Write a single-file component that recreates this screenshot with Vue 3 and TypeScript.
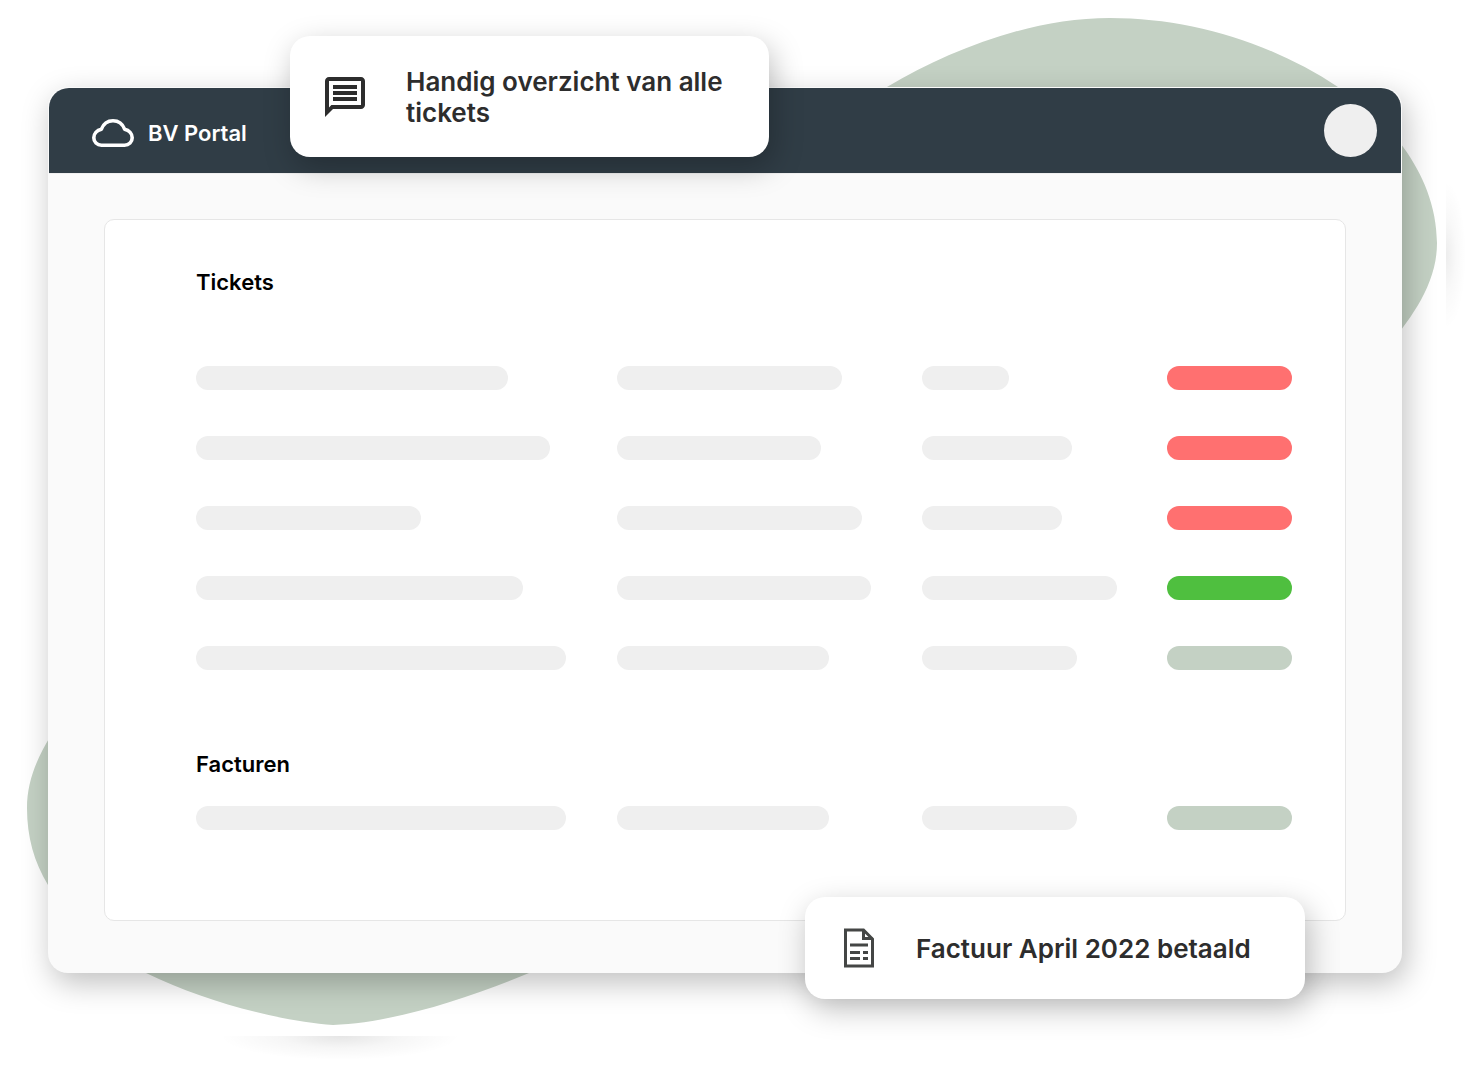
<script setup lang="ts">
type Status = 'open' | 'done' | 'idle'

interface Row {
  bars: [number, number, number]
  status: Status
}

interface Section {
  id: string
  title: string
  rows: Row[]
}

const sections: Section[] = [
  {
    id: 'tickets',
    title: 'Tickets',
    rows: [
      { bars: [312, 225, 87], status: 'open' },
      { bars: [354, 204, 150], status: 'open' },
      { bars: [225, 245, 140], status: 'open' },
      { bars: [327, 254, 195], status: 'done' },
      { bars: [370, 212, 155], status: 'idle' },
    ],
  },
  {
    id: 'facturen',
    title: 'Facturen',
    rows: [{ bars: [370, 212, 155], status: 'idle' }],
  },
]
</script>

<template>
  <div class="page">
    <div class="stage">
      <svg class="blob blob-top" width="451" height="360" viewBox="0 0 451 360" aria-hidden="true">
        <defs>
          <radialGradient id="glow-right" gradientUnits="userSpaceOnUse" cx="0" cy="0" r="1" gradientTransform="translate(426 255) scale(20 74)">
            <stop offset="0" stop-color="#000" stop-opacity="0.07" />
            <stop offset="0.5" stop-color="#000" stop-opacity="0.025" />
            <stop offset="1" stop-color="#000" stop-opacity="0" />
          </radialGradient>
        </defs>
        <path
          d="M7 87C70 50 150 18 230 18C310 18 390 42 458 87C500 112 557 170 557 243C557 285 530 320 505 350L7 350Z"
          transform="translate(-140 0)"
          fill="#c4d1c4"
        />
        <path d="M426 180h25v150h-25z" fill="url(#glow-right)" />
      </svg>
      <svg class="blob blob-bottom" width="600" height="360" viewBox="0 0 600 360" aria-hidden="true">
        <defs>
          <radialGradient id="glow-bottom" gradientUnits="userSpaceOnUse" cx="0" cy="0" r="1" gradientTransform="translate(340 329) scale(120 24)">
            <stop offset="0" stop-color="#000" stop-opacity="0.1" />
            <stop offset="0.5" stop-color="#000" stop-opacity="0.035" />
            <stop offset="1" stop-color="#000" stop-opacity="0" />
          </radialGradient>
        </defs>
        <path
          d="M70 0C45 35 27 65 27 101C27 130 34 155 48 178C70 215 105 245 146 266C205 295 280 314 333 318C390 316 465 293 529 266L580 240V0Z"
          fill="#c4d1c4"
        />
        <path d="M210 329h260v28H210z" fill="url(#glow-bottom)" />
      </svg>

      <main class="window">
        <header class="bar">
          <svg class="cloud" width="42" height="28" viewBox="0 0 42 28" aria-hidden="true">
            <path
              d="M9.5 26.2H32.5C37 26.2 40.2 23 40.2 18.8C40.2 14.8 37.2 11.2 32.6 10.2C30.6 5 26.6 1.8 21 1.8S11.4 5 9.4 10.2C4.8 11.2 1.8 14.8 1.8 18.8C1.8 23 5 26.2 9.5 26.2Z"
              fill="none"
              stroke="#fff"
              stroke-width="3.6"
              stroke-linejoin="round"
            />
          </svg>
          <span class="brand">BV Portal</span>
          <span class="avatar"></span>
        </header>

        <div class="card">
          <section v-for="section in sections" :key="section.id" class="section">
            <h2 class="title">{{ section.title }}</h2>
            <div :class="['rows', section.id]">
              <div v-for="(row, index) in section.rows" :key="index" class="row">
                <span
                  v-for="(width, column) in row.bars"
                  :key="column"
                  class="pill"
                  :style="{ width: width + 'px' }"
                ></span>
                <span :class="['pill', row.status]"></span>
              </div>
            </div>
          </section>
        </div>
      </main>

      <aside class="toast toast-top">
        <svg width="40" height="40" viewBox="2 2 20 20" aria-hidden="true">
          <path
            fill="#2d2d2d"
            d="M4 4h16v12H5.2L4 17.2V4m0-2c-1.1 0-2 .9-2 2v18l4-4h14c1.1 0 2-.9 2-2V4c0-1.1-.9-2-2-2H4zm2 10h12v2H6v-2zm0-3h12v2H6V9zm0-3h12v2H6V6z"
          />
        </svg>
        <p class="message">Handig overzicht van alle tickets</p>
      </aside>

      <aside class="toast toast-bottom">
        <svg width="30" height="40" viewBox="0 0 30 40" aria-hidden="true">
          <path d="M1.5 2H19.5L28.5 11V38H1.5Z" fill="none" stroke="#444645" stroke-width="3" />
          <path d="M19.5 2V10.5H28.5" fill="none" stroke="#444645" stroke-width="3" />
          <path d="M6 17H24M6 24.5H16M19 24.5H24M6 30.5H16M19 30.5H24" fill="none" stroke="#444645" stroke-width="3" />
        </svg>
        <p class="message">Factuur April 2022 betaald</p>
      </aside>
    </div>
  </div>
</template>

<style>
body {
  margin: 0;
  background: #fff;
}
</style>

<style scoped>
.page {
  padding: 87px 69px 94px 48px;
  overflow: hidden;
  font-family: Inter, 'Liberation Sans', sans-serif;
  font-weight: 600;
}

.stage {
  position: relative;
}

.blob {
  position: absolute;
}

.blob-top {
  top: -87px;
  right: -69px;
  overflow: visible;
}

.blob-bottom {
  bottom: -94px;
  left: -48px;
}

.window {
  position: relative;
  padding: 1px 1px 52px;
  border-radius: 20px;
  background: #fafafa;
  box-shadow: 4px 10px 30px rgba(0, 0, 0, 0.25);
}

.bar {
  display: flex;
  align-items: center;
  height: 85px;
  padding: 0 24px 0 43px;
  border-bottom: 1px solid #efefef;
  border-radius: 20px 20px 0 0;
  background: #303d46;
  background-clip: padding-box;
}

.cloud {
  flex: none;
  margin: 5px 14px 0 0;
}

.brand {
  padding-top: 5px;
  color: #fff;
  font-size: 22px;
  line-height: 28px;
}

.avatar {
  width: 53px;
  height: 53px;
  margin-left: auto;
  border-radius: 50%;
  background: #efefef;
}

.card {
  margin: 45px 55px 0;
  padding: 48px 53px 90px 91px;
  border: 1px solid #e6e6e6;
  border-radius: 10px;
  background: #fff;
}

.section + .section {
  margin-top: 80px;
}

.title {
  margin: 0;
  color: #000;
  font-size: 22px;
  font-weight: 600;
  line-height: 28px;
}

.rows {
  display: grid;
  gap: 46px;
  margin-top: 28px;
}

.rows.tickets {
  margin-top: 70px;
}

.row {
  display: grid;
  grid-template-columns: 421fr 305fr 245fr 125px;
}

.pill {
  height: 24px;
  border-radius: 12px;
  background: #efefef;
}

.open {
  background: #ff7070;
}

.done {
  background: #4fbf3f;
}

.idle {
  background: #c4d1c4;
}

.toast {
  position: absolute;
  box-sizing: border-box;
  display: flex;
  align-items: center;
  border-radius: 20px;
  background: #fff;
  box-shadow: 4px 10px 30px rgba(0, 0, 0, 0.25);
}

.toast svg {
  flex: none;
}

.toast-top {
  top: -51px;
  left: 242px;
  width: 479px;
  height: 121px;
  padding: 0 35px;
  gap: 41px;
}

.toast-bottom {
  right: 97px;
  bottom: -26px;
  width: 500px;
  height: 102px;
  padding: 0 39px;
  gap: 42px;
}

.message {
  margin: 0;
  color: #2d2d2d;
  font-size: 26px;
  line-height: 31px;
}
</style>
